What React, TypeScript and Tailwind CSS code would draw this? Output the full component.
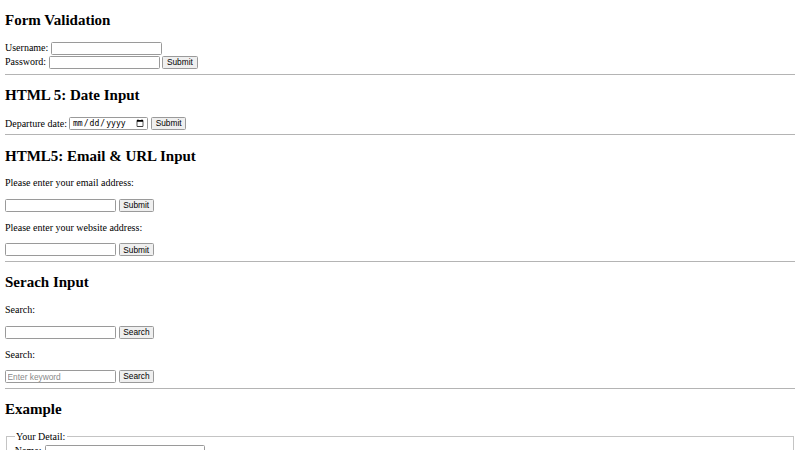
import React from "react";

// Scaled-down default browser form page (everything at 0.625 of the UA sizes)
const inputCls =
  "h-[13px] w-[111px] rounded-[1.5px] border border-[#9a9a9a] bg-white px-[1.5px] font-['Liberation_Sans',Arial,sans-serif] text-[8.33px] text-black outline-none placeholder:text-[#8a8a8a]";
const btnCls =
  "h-[13px] rounded-[1.5px] border border-[#9a9a9a] bg-[#efefef] px-[3.75px] font-['Liberation_Sans',Arial,sans-serif] text-[8.33px] leading-none text-black";

function Heading({
  children,
  className = "my-[12.45px]",
}: {
  children: React.ReactNode;
  className?: string;
}) {
  return (
    <h2 className={"text-[15px] font-bold leading-[17.25px] " + className}>
      {children}
    </h2>
  );
}

function Rule() {
  return <hr className="my-[4.5px] border-[#b4b4b4]" />;
}

function InputRow({
  type = "text",
  button,
  placeholder,
}: {
  type?: string;
  button: string;
  placeholder?: string;
}) {
  return (
    <form
      className="flex h-[13px] items-center gap-[2.5px]"
      onSubmit={(e) => e.preventDefault()}
    >
      <input type={type} placeholder={placeholder} className={inputCls} />
      <button type="submit" className={btnCls}>
        {button}
      </button>
    </form>
  );
}

export default function App() {
  return (
    <div className="bg-white px-[5px] font-['Liberation_Serif','Times_New_Roman',serif] text-[10px] leading-[11.5px] text-black">
      <Heading className="mt-[12.45px] mb-[11.5px]">Form Validation</Heading>
      <form onSubmit={(e) => e.preventDefault()}>
        <div className="flex h-[14px] items-center gap-[2.5px]">
          <label htmlFor="username">Username:</label>
          <input id="username" type="text" required className={inputCls} />
        </div>
        <div className="flex h-[14px] items-center gap-[2.5px]">
          <label htmlFor="password">Password:</label>
          <input id="password" type="password" required className={inputCls} />
          <button type="submit" className={btnCls}>
            Submit
          </button>
        </div>
      </form>
      <Rule />

      <Heading>HTML 5: Date Input</Heading>
      <form
        className="flex h-[13px] items-center gap-[2.5px]"
        onSubmit={(e) => e.preventDefault()}
      >
        <label htmlFor="departure">Departure date:</label>
        <input
          id="departure"
          type="date"
          className="h-[13px] w-[79px] rounded-[1.5px] border border-[#9a9a9a] bg-white px-[1.5px] font-['DejaVu_Sans_Mono',monospace] text-[8.1px] text-black"
        />
        <button type="submit" className={btnCls}>
          Submit
        </button>
      </form>
      <Rule />

      <Heading>HTML5: Email &amp; URL Input</Heading>
      <p className="my-[10px]">Please enter your email address:</p>
      <InputRow type="email" button="Submit" />
      <p className="my-[10px]">Please enter your website address:</p>
      <InputRow type="url" button="Submit" />
      <Rule />

      <Heading>Serach Input</Heading>
      <p className="my-[10px]">Search:</p>
      <InputRow type="search" button="Search" />
      <p className="my-[10px]">Search:</p>
      <InputRow type="search" button="Search" placeholder="Enter keyword" />
      <Rule />

      <Heading>Example</Heading>
      <form onSubmit={(e) => e.preventDefault()}>
        <fieldset className="mx-[1.25px] border border-[#c4c4c4] px-[7.5px] pt-[2px] pb-[6px]">
          <legend className="px-[1.25px]">Your Detail:</legend>
          <div className="flex h-[14px] items-center gap-[2.5px]">
            <label htmlFor="name" className="w-[28px]">
              Name:
            </label>
            <input id="name" type="text" className={inputCls + " w-[160px]"} />
          </div>
          <div className="flex h-[14px] items-center gap-[2.5px]">
            <label htmlFor="mail" className="w-[28px]">
              Email:
            </label>
            <input id="mail" type="email" className={inputCls + " w-[160px]"} />
          </div>
        </fieldset>
      </form>
    </div>
  );
}
